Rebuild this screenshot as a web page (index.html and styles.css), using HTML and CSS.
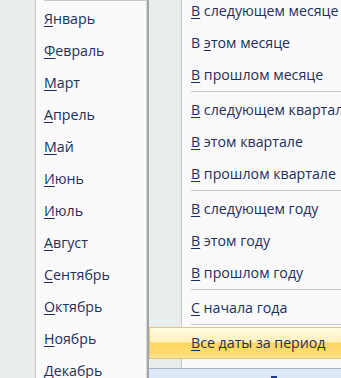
FILE: index.html
```html
<!DOCTYPE html>
<html>
<head>
  <title>Фильтр по дате</title>
  <link rel="stylesheet" href="styles.css">
</head>
<body>
  <div class="menus">
    <!-- months submenu -->
    <ul class="menu months">
      <li class="sep"></li>
      <li class="item"><u>Я</u>нварь</li>
      <li class="item"><u>Ф</u>евраль</li>
      <li class="item"><u>М</u>арт</li>
      <li class="item"><u>А</u>прель</li>
      <li class="item"><u>М</u>ай</li>
      <li class="item"><u>И</u>юнь</li>
      <li class="item"><u>И</u>юль</li>
      <li class="item"><u>А</u>вгуст</li>
      <li class="item"><u>С</u>ентябрь</li>
      <li class="item"><u>О</u>ктябрь</li>
      <li class="item"><u>Н</u>оябрь</li>
      <li class="item"><u>Д</u>екабрь</li>
    </ul>

    <!-- period menu -->
    <div class="menu periods">
      <ul class="list">
        <li class="item"><u>В</u> следующем месяце</li>
        <li class="item">В <u>э</u>том месяце</li>
        <li class="item"><u>В</u> прошлом месяце</li>
        <li class="sep"></li>
        <li class="item"><u>В</u> следующем квартале</li>
        <li class="item"><u>В</u> этом квартале</li>
        <li class="item"><u>В</u> прошлом квартале</li>
        <li class="sep"></li>
        <li class="item"><u>В</u> следующем году</li>
        <li class="item"><u>В</u> этом году</li>
        <li class="item"><u>В</u> прошлом году</li>
        <li class="sep"></li>
        <li class="item"><u>С</u> начала года</li>
        <li class="sep"></li>
        <li class="item active"><u>В</u>се даты за период</li>
      </ul>
      <div class="footer"><span class="mark"></span></div>
    </div>
  </div>
</body>
</html>
```

FILE: styles.css
```css
* { box-sizing: border-box; }
html, body {
  margin: 0;
  width: 341px;
  height: 378px;
  overflow: hidden;
  background: #fafafa;
}
body {
  font-family: "Open Sans", "Noto Sans", sans-serif;
  font-size: 14.2px;
  color: #1c2f5d;
}
ul { list-style: none; margin: 0; padding: 0; }
u { text-decoration-thickness: 1px; text-underline-offset: 2px; }

.menus {
  display: flex;
  align-items: flex-start;
  height: 378px;
}

.menu {
  flex-shrink: 0;
  white-space: nowrap;
}

.item {
  height: 32px;
  line-height: 32px;
}
.sep {
  height: 3px;
  border-top: 1px solid #c8c8c8;
}

/* left menu */
.months {
  width: 147px;
  height: 378px;
  border-right: 1px solid #d6d6d6;
  background: linear-gradient(to right, #e9eded 35px, #c6c8c8 35px 36px, #fafafa 36px);
}
.months .item { padding-left: 44px; }
.months .sep { margin-left: 44px; }

/* right menu */
.periods {
  width: 230px;
  height: 378px;
  border-left: 2px solid #a2a6a8;
  display: flex;
  flex-direction: column;
  background: linear-gradient(to right, #e9eded 32px, #c6c8c8 32px 33px, #fafafa 33px);
}
.periods .list {
  margin-top: -5px;
  padding-bottom: 9px;
}
.periods .item { padding-left: 42px; }
.periods .sep { margin-left: 42px; }

.periods .active {
  border: 1px solid #e0c57e;
  padding-left: 41px;
  line-height: 30px;
  background: linear-gradient(#fffae2 0%, #fff0bd 46%, #ffd75f 50%, #ffdc70 85%, #ffe497 100%);
}

.footer {
  flex: 1;
  border-top: 1px solid #a9b4c0;
  background: #dde7f7;
  position: relative;
}
.footer .mark {
  position: absolute;
  left: 122px;
  top: 7px;
  width: 6px;
  height: 3px;
  background: #1f3a8a;
}
```
